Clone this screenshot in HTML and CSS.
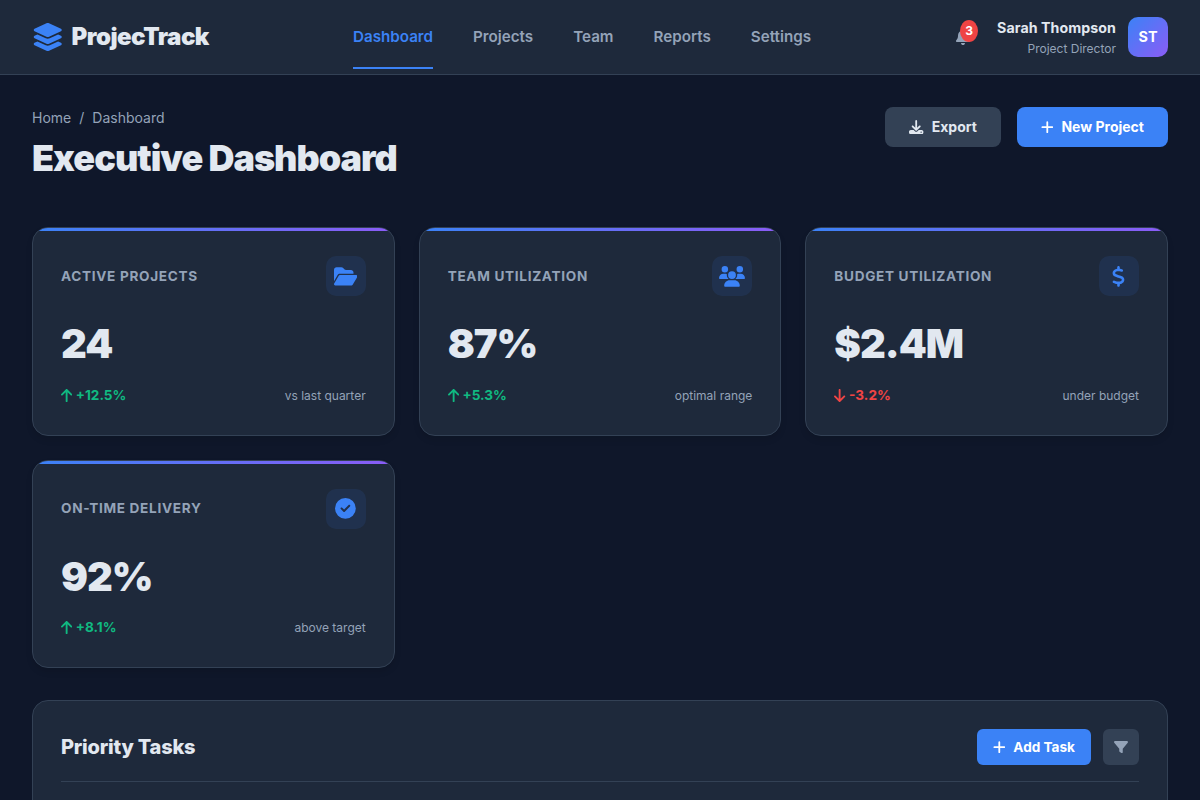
FILE: index.html
```html
<!DOCTYPE html>
<html>
<head>
  <title>ProjecTrack - Executive Dashboard</title>
  <link rel="stylesheet" href="styles.css">
</head>
<body>

  <!-- Top bar -->
  <header class="topbar">
    <div class="logo">
      <svg class="logo-icon" viewBox="0 0 576 512"><path d="M264.5 5.2c14.9-6.9 32.1-6.9 47 0l218.6 101c8.5 3.9 13.9 12.4 13.9 21.8s-5.4 17.9-13.9 21.8l-218.6 101c-14.9 6.9-32.1 6.9-47 0L45.9 149.8C37.4 145.8 32 137.3 32 128s5.4-17.9 13.9-21.8L264.5 5.2zM476.9 209.6l53.2 24.6c8.5 3.9 13.9 12.4 13.9 21.8s-5.4 17.9-13.9 21.8l-218.6 101c-14.9 6.9-32.1 6.9-47 0L45.9 277.8C37.4 273.8 32 265.3 32 256s5.4-17.9 13.9-21.8l53.2-24.6 152 70.2c23.4 10.8 50.4 10.8 73.8 0l152-70.2zm-152 198.2l152-70.2 53.2 24.6c8.5 3.9 13.9 12.4 13.9 21.8s-5.4 17.9-13.9 21.8l-218.6 101c-14.9 6.9-32.1 6.9-47 0L45.9 405.8C37.4 401.8 32 393.3 32 384s5.4-17.9 13.9-21.8l53.2-24.6 152 70.2c23.4 10.8 50.4 10.8 73.8 0z"/></svg>
      <span>ProjecTrack</span>
    </div>
    <nav class="nav">
      <a class="nav-link active">Dashboard</a>
      <a class="nav-link">Projects</a>
      <a class="nav-link">Team</a>
      <a class="nav-link">Reports</a>
      <a class="nav-link">Settings</a>
    </nav>
    <div class="user-area">
      <div class="bell">
        <svg class="bell-icon" viewBox="0 0 448 512"><path d="M224 0c-17.7 0-32 14.3-32 32V51.2C119 66 64 130.6 64 208v18.8c0 47-17.3 92.4-48.5 127.6l-7.4 8.3c-8.4 9.4-10.4 22.9-5.3 34.4S19.4 416 32 416H416c12.6 0 24-7.4 29.2-18.9s3.1-25-5.3-34.4l-7.4-8.3C401.3 319.2 384 273.9 384 226.8V208c0-77.4-55-142-128-156.8V32c0-17.7-14.3-32-32-32zm45.3 493.3c12-12 18.7-28.3 18.7-45.3H224 160c0 17 6.7 33.3 18.7 45.3s28.3 18.7 45.3 18.7s33.3-6.7 45.3-18.7z"/></svg>
        <span class="badge">3</span>
      </div>
      <div class="user">
        <div class="user-info">
          <div class="user-name">Sarah Thompson</div>
          <div class="user-role">Project Director</div>
        </div>
        <div class="avatar">ST</div>
      </div>
    </div>
  </header>

  <main class="main">

    <!-- Page heading -->
    <div class="page-head">
      <div>
        <div class="breadcrumb"><span>Home</span><span>/</span><span>Dashboard</span></div>
        <h1 class="page-title">Executive Dashboard</h1>
      </div>
      <div class="page-actions">
        <button class="btn btn-grey">
          <svg class="btn-icon" viewBox="0 0 512 512"><path d="M288 32c0-17.7-14.3-32-32-32s-32 14.3-32 32V274.7l-73.4-73.4c-12.5-12.5-32.8-12.5-45.3 0s-12.5 32.8 0 45.3l128 128c12.5 12.5 32.8 12.5 45.3 0l128-128c12.5-12.5 12.5-32.8 0-45.3s-32.8-12.5-45.3 0L288 274.7V32zM64 352c-35.3 0-64 28.7-64 64v32c0 35.3 28.7 64 64 64H448c35.3 0 64-28.7 64-64V416c0-35.3-28.7-64-64-64H346.5l-45.3 45.3c-25 25-65.5 25-90.5 0L165.5 352H64zm368 56a24 24 0 1 1 0 48 24 24 0 1 1 0-48z"/></svg>
          Export
        </button>
        <button class="btn btn-blue">
          <svg class="btn-icon plus" viewBox="0 0 448 512"><path d="M256 80c0-17.7-14.3-32-32-32s-32 14.3-32 32V224H48c-17.7 0-32 14.3-32 32s14.3 32 32 32H192V432c0 17.7 14.3 32 32 32s32-14.3 32-32V288H400c17.7 0 32-14.3 32-32s-14.3-32-32-32H256V80z"/></svg>
          New Project
        </button>
      </div>
    </div>

    <!-- Stat cards -->
    <div class="stats">
      <div class="card">
        <div class="card-top">
          <div class="card-label">Active Projects</div>
          <div class="card-icon"><svg viewBox="0 0 576 512" class="folder"><path d="M88.7 223.8L0 375.8V96C0 60.7 28.7 32 64 32H181.5c17 0 33.3 6.7 45.3 18.7l26.5 26.5c12 12 28.3 18.7 45.3 18.7H416c35.3 0 64 28.7 64 64v32H144c-22.8 0-43.8 12.1-55.3 31.8zm27.6 16.1C122.1 230 132.6 224 144 224H544c11.5 0 22 6.1 27.7 16.1s5.7 22.2-.1 32.1l-112 192C453.9 474 443.4 480 432 480H32c-11.5 0-22-6.1-27.7-16.1s-5.7-22.2 .1-32.1l112-192z"/></svg></div>
        </div>
        <div class="card-value">24</div>
        <div class="card-foot">
          <span class="change up"><svg viewBox="0 0 384 512"><path d="M214.6 41.4c-12.5-12.5-32.8-12.5-45.3 0l-160 160c-12.5 12.5-12.5 32.8 0 45.3s32.8 12.5 45.3 0L160 141.2V448c0 17.7 14.3 32 32 32s32-14.3 32-32V141.2L329.4 246.6c12.5 12.5 32.8 12.5 45.3 0s12.5-32.8 0-45.3l-160-160z"/></svg>+12.5%</span>
          <span class="note">vs last quarter</span>
        </div>
      </div>

      <div class="card">
        <div class="card-top">
          <div class="card-label">Team Utilization</div>
          <div class="card-icon"><svg viewBox="0 0 640 512" class="users"><path d="M144 0a80 80 0 1 1 0 160A80 80 0 1 1 144 0zM512 0a80 80 0 1 1 0 160A80 80 0 1 1 512 0zM0 298.7C0 239.8 47.8 192 106.7 192h42.7c15.9 0 31 3.5 44.6 9.7c-1.3 7.2-1.9 14.7-1.9 22.3c0 38.2 16.8 72.5 43.3 96c-.2 0-.4 0-.7 0H21.3C9.6 320 0 310.4 0 298.7zM405.3 320c-.2 0-.4 0-.7 0c26.6-23.5 43.3-57.8 43.3-96c0-7.6-.7-15-1.9-22.3c13.6-6.3 28.7-9.7 44.6-9.7h42.7C592.2 192 640 239.8 640 298.7c0 11.8-9.6 21.3-21.3 21.3H405.3zM224 224a96 96 0 1 1 192 0 96 96 0 1 1 -192 0zM128 485.3C128 411.7 187.7 352 261.3 352H378.7C452.3 352 512 411.7 512 485.3c0 14.7-11.9 26.7-26.7 26.7H154.7c-14.7 0-26.7-11.9-26.7-26.7z"/></svg></div>
        </div>
        <div class="card-value">87%</div>
        <div class="card-foot">
          <span class="change up"><svg viewBox="0 0 384 512"><path d="M214.6 41.4c-12.5-12.5-32.8-12.5-45.3 0l-160 160c-12.5 12.5-12.5 32.8 0 45.3s32.8 12.5 45.3 0L160 141.2V448c0 17.7 14.3 32 32 32s32-14.3 32-32V141.2L329.4 246.6c12.5 12.5 32.8 12.5 45.3 0s12.5-32.8 0-45.3l-160-160z"/></svg>+5.3%</span>
          <span class="note">optimal range</span>
        </div>
      </div>

      <div class="card">
        <div class="card-top">
          <div class="card-label">Budget Utilization</div>
          <div class="card-icon"><svg viewBox="0 0 320 512" class="dollar"><path d="M160 0c17.7 0 32 14.3 32 32V67.7c1.6 .2 3.1 .4 4.7 .7c.4 .1 .7 .1 1.1 .2l48 8.8c17.4 3.2 28.9 19.9 25.7 37.2s-19.9 28.9-37.2 25.7l-47.5-8.7c-31.3-4.6-58.9-1.5-78.3 6.2s-27.2 18.3-29 28.1c-2 10.7-.5 16.7 1.2 20.4c1.8 3.9 5.5 8.3 12.8 13.2c16.3 10.7 41.3 17.7 73.7 26.3l2.9 .8c28.6 7.6 63.6 16.8 89.6 33.8c14.2 9.3 27.6 21.9 35.9 39.5c8.5 17.9 10.3 37.9 6.4 59.2c-6.9 38-33.1 63.4-65.6 76.7c-13.7 5.6-28.6 9.2-44.4 11V480c0 17.7-14.3 32-32 32s-32-14.3-32-32V445.1c-.4-.1-.9-.1-1.3-.2l-.2 0 0 0c-24.4-3.8-64.5-14.3-91.5-26.3c-16.1-7.2-23.4-26.1-16.2-42.2s26.1-23.4 42.2-16.2c20.9 9.3 55.3 18.5 75.2 21.6c31.9 4.7 58.2 2 76-5.3c16.9-6.9 24.6-16.9 26.8-28.9c1.9-10.6 .4-16.7-1.3-20.4c-1.9-4-5.6-8.4-13-13.3c-16.4-10.7-41.5-17.7-74-26.3l-2.8-.7 0 0C119.4 279.3 84.4 270 58.4 253c-14.2-9.3-27.5-22-35.8-39.6c-8.4-17.9-10.1-37.9-6.1-59.2C23.7 116 52.3 91.2 84.8 78.3c13.3-5.3 27.9-8.9 43.2-11V32c0-17.7 14.3-32 32-32z"/></svg></div>
        </div>
        <div class="card-value">$2.4M</div>
        <div class="card-foot">
          <span class="change down"><svg viewBox="0 0 384 512"><path d="M169.4 470.6c12.5 12.5 32.8 12.5 45.3 0l160-160c12.5-12.5 12.5-32.8 0-45.3s-32.8-12.5-45.3 0L224 370.8 224 64c0-17.7-14.3-32-32-32s-32 14.3-32 32l0 306.7L54.6 265.4c-12.5-12.5-32.8-12.5-45.3 0s-12.5 32.8 0 45.3l160 160z"/></svg>-3.2%</span>
          <span class="note">under budget</span>
        </div>
      </div>

      <div class="card">
        <div class="card-top">
          <div class="card-label">On-Time Delivery</div>
          <div class="card-icon"><svg viewBox="0 0 512 512" class="check"><path d="M256 512A256 256 0 1 0 256 0a256 256 0 1 0 0 512zM369 209L241 337c-9.4 9.4-24.6 9.4-33.9 0l-64-64c-9.4-9.4-9.4-24.6 0-33.9s24.6-9.4 33.9 0l47 47L335 175c9.4-9.4 24.6-9.4 33.9 0s9.4 24.6 0 33.9z"/></svg></div>
        </div>
        <div class="card-value">92%</div>
        <div class="card-foot">
          <span class="change up"><svg viewBox="0 0 384 512"><path d="M214.6 41.4c-12.5-12.5-32.8-12.5-45.3 0l-160 160c-12.5 12.5-12.5 32.8 0 45.3s32.8 12.5 45.3 0L160 141.2V448c0 17.7 14.3 32 32 32s32-14.3 32-32V141.2L329.4 246.6c12.5 12.5 32.8 12.5 45.3 0s12.5-32.8 0-45.3l-160-160z"/></svg>+8.1%</span>
          <span class="note">above target</span>
        </div>
      </div>
    </div>

    <!-- Tasks panel, runs past the fold -->
    <section class="panel">
      <div class="panel-head">
        <h2 class="panel-title">Priority Tasks</h2>
        <div class="panel-actions">
          <button class="btn btn-blue btn-small">
            <svg class="btn-icon plus" viewBox="0 0 448 512"><path d="M256 80c0-17.7-14.3-32-32-32s-32 14.3-32 32V224H48c-17.7 0-32 14.3-32 32s14.3 32 32 32H192V432c0 17.7 14.3 32 32 32s32-14.3 32-32V288H400c17.7 0 32-14.3 32-32s-14.3-32-32-32H256V80z"/></svg>
            Add Task
          </button>
          <button class="icon-btn">
            <svg viewBox="0 0 512 512"><path d="M3.9 54.9C10.5 40.9 24.5 32 40 32H472c15.5 0 29.5 8.9 36.1 22.9s4.6 30.5-5.2 42.5L320 320.9V448c0 12.1-6.8 23.2-17.7 28.6s-23.8 4.3-33.5-3l-64-48c-8.1-6-12.8-15.5-12.8-25.6V320.9L9 97.3C-.7 85.4-2.8 68.8 3.9 54.9z"/></svg>
          </button>
        </div>
      </div>
    </section>

  </main>

</body>
</html>
```

FILE: styles.css
```css
* {
  box-sizing: border-box;
}

html {
  overflow: hidden;
}

body {
  margin: 0;
  background: #0f172a;
  color: #e2e8f0;
  font-family: Inter, "Liberation Sans", sans-serif;
  line-height: 1.6;
}

svg {
  display: block;
  fill: currentColor;
}

/* top bar */
.topbar {
  display: flex;
  justify-content: space-between;
  align-items: center;
  height: 75px;
  padding: 0 32px;
  background: #1e293b;
  border-bottom: 1px solid #334155;
}

.logo {
  display: flex;
  align-items: center;
  gap: 8px;
  font-size: 24px;
  font-weight: 900;
  letter-spacing: -0.5px;
}

.logo-icon {
  width: 31.5px;
  height: 28px;
  color: #3b82f6;
}

.nav {
  display: flex;
  gap: 40px;
  margin-left: -1px;
}

.nav-link {
  position: relative;
  font-size: 15.2px;
  font-weight: 600;
  color: #94a3b8;
}

.nav-link.active {
  color: #3b82f6;
}

.nav-link.active::after {
  content: "";
  position: absolute;
  left: 0;
  right: 0;
  bottom: -20px;
  height: 2px;
  background: #3b82f6;
}

.user-area {
  display: flex;
  align-items: center;
  gap: 27px;
}

.bell {
  position: relative;
  color: #94a3b8;
}

.bell-icon {
  width: 14px;
  height: 16px;
}

.badge {
  position: absolute;
  top: -9px;
  left: 4px;
  display: flex;
  justify-content: center;
  align-items: center;
  width: 18px;
  height: 22px;
  border-radius: 50%;
  background: #ef4444;
  color: white;
  font-size: 12px;
  font-weight: 700;
}

.user {
  display: flex;
  align-items: center;
  gap: 12px;
}

.user-info {
  padding-top: 1px;
  text-align: right;
}

.user-name {
  font-size: 14.2px;
  font-weight: 700;
  letter-spacing: 0.07px;
}

.user-role {
  font-size: 12px;
  color: #94a3b8;
}

.avatar {
  display: flex;
  justify-content: center;
  align-items: center;
  width: 40px;
  height: 40px;
  border-radius: 10px;
  background: linear-gradient(135deg, #3b82f6, #8b5cf6);
  color: white;
  font-size: 14.4px;
  font-weight: 700;
}

/* page */
.main {
  padding: 32px;
}

.page-head {
  display: flex;
  justify-content: space-between;
  align-items: flex-start;
  margin-bottom: 40px;
}

.breadcrumb {
  display: flex;
  gap: 8px;
  margin-bottom: 0.4px;
  font-size: 14px;
  color: #94a3b8;
}

.page-title {
  margin: 0;
  font-size: 36px;
  font-weight: 900;
  letter-spacing: -1px;
}

.page-actions {
  display: flex;
  gap: 16px;
}

.btn {
  display: flex;
  align-items: center;
  gap: 8px;
  height: 39.6px;
  padding: 0 24px;
  border: none;
  border-radius: 8px;
  font-family: inherit;
  font-size: 14px;
  font-weight: 700;
}

.btn-grey {
  background: #334155;
  color: #e2e8f0;
}

.btn-blue {
  background: #3b82f6;
  color: white;
}

.btn-icon {
  width: 14.4px;
  height: 14.4px;
}

.btn-icon.plus {
  width: 12.6px;
}

.btn-small {
  height: 36px;
  padding: 0 16px;
  border-radius: 6px;
  font-size: 13.6px;
}

/* stat cards */
.stats {
  display: grid;
  grid-template-columns: repeat(3, 1fr);
  gap: 24px;
  margin-bottom: 32px;
}

.card {
  position: relative;
  padding: 28px;
  overflow: hidden;
  background: #1e293b;
  border: 1px solid #334155;
  border-radius: 16px;
  box-shadow: 0 4px 6px rgba(0, 0, 0, 0.1);
}

.card::before {
  content: "";
  position: absolute;
  top: 0;
  left: 0;
  right: 0;
  height: 3px;
  background: linear-gradient(90deg, #3b82f6, #8b5cf6);
}

.card-top {
  display: flex;
  justify-content: space-between;
  align-items: center;
  margin-bottom: 16px;
}

.card-label {
  font-size: 13.6px;
  font-weight: 700;
  letter-spacing: 0.68px;
  text-transform: uppercase;
  color: #94a3b8;
}

.card-icon {
  display: flex;
  justify-content: center;
  align-items: center;
  width: 40px;
  height: 40px;
  border-radius: 10px;
  background: rgba(59, 130, 246, 0.1);
  color: #3b82f6;
}

.folder {
  width: 23.4px;
  height: 20.8px;
}

.users {
  width: 26px;
  height: 20.8px;
}

.dollar {
  width: 13px;
  height: 20.8px;
}

.check {
  width: 20.8px;
  height: 20.8px;
}

.card-value {
  margin-bottom: 8px;
  font-size: 40px;
  font-weight: 900;
  letter-spacing: -1px;
}

.card-foot {
  display: flex;
  justify-content: space-between;
  align-items: center;
  min-height: 22.4px;
}

.change {
  display: flex;
  align-items: center;
  gap: 3.5px;
  font-size: 13.6px;
  font-weight: 700;
}

.change svg {
  width: 11.25px;
  height: 15px;
}

.up {
  color: #10b981;
}

.down {
  color: #ef4444;
}

.note {
  font-size: 12px;
  color: #94a3b8;
}

/* tasks panel */
.panel {
  min-height: 300px;
  padding: 28px;
  background: #1e293b;
  border: 1px solid #334155;
  border-radius: 16px;
}

.panel-head {
  display: flex;
  justify-content: space-between;
  align-items: center;
  padding-bottom: 16px;
  border-bottom: 1px solid #334155;
}

.panel-title {
  margin: 0;
  font-size: 20px;
  font-weight: 800;
  letter-spacing: -0.2px;
}

.panel-actions {
  display: flex;
  gap: 12px;
}

.icon-btn {
  display: flex;
  justify-content: center;
  align-items: center;
  width: 36px;
  height: 36px;
  padding: 0;
  border: none;
  border-radius: 6px;
  background: #334155;
  color: #94a3b8;
}

.icon-btn svg {
  width: 14px;
  height: 14px;
}
```
